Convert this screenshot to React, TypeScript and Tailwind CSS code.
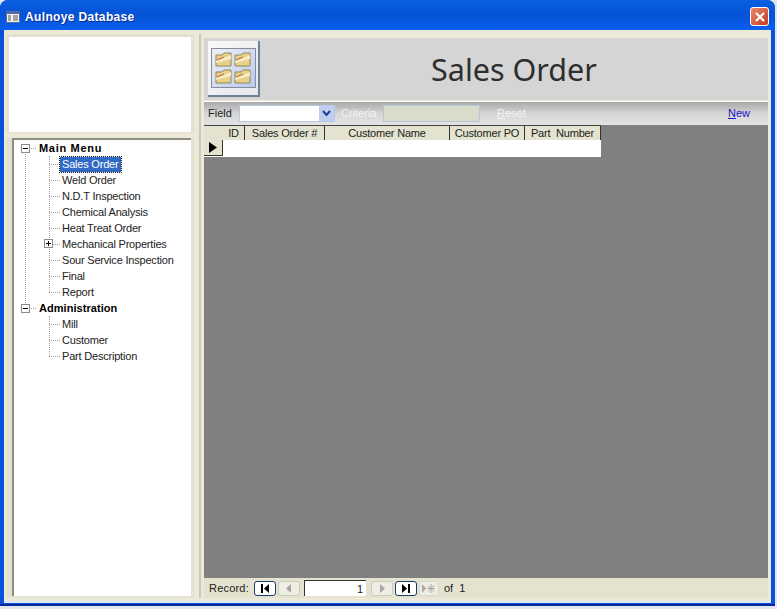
import React from "react";

const font = { fontFamily: '"Liberation Sans", Arial, sans-serif' };

const menu = [
  { label: "Main Menu", tracking: "tracking-[0.7px]", children: [
    "Sales Order", "Weld Order", "N.D.T Inspection", "Chemical Analysis", "Heat Treat Order",
    "Mechanical Properties", "Sour Service Inspection", "Final", "Report",
  ] },
  { label: "Administration", tracking: "tracking-[0.05px]", children: ["Mill", "Customer", "Part Description"] },
];

const columns = [
  { label: "ID", width: "w-[22px]" },
  { label: "Sales Order #", width: "w-[80px]" },
  { label: "Customer Name", width: "w-[125px]" },
  { label: "Customer PO", width: "w-[75px]" },
  { label: "Part  Number", width: "w-[76px]" },
];

const PlusMinus = ({ plus }: { plus?: boolean }) => (
  <span className="relative block w-[9px] h-[9px] border border-[#8c8c8c] bg-white">
    <span className="absolute left-[1px] top-[3px] w-[5px] h-[1px] bg-black" />
    {plus && <span className="absolute left-[3px] top-[1px] w-[1px] h-[5px] bg-black" />}
  </span>
);

const Folder = () => (
  <svg width="17" height="15" viewBox="0 0 17 15">
    <path d="M1 3 L1 14 L16 14 L16 1 L9 1 L7 3 Z" fill="#e8d08a" stroke="#8f8a55" />
    <path d="M1 9 L9 6 L16 3 L16 7 L1 11 Z" fill="#f8ecc0" />
    <path d="M2 8 L9 5" stroke="#c05a4a" />
  </svg>
);

const NavButton = ({ kind, active }: { kind: "first" | "prev" | "next" | "last" | "new"; active?: boolean }) => {
  const color = active ? "#000000" : "#a8a8a0";
  return (
    <span className={`flex items-center justify-center h-[15px] rounded-[3px] border ${kind === "new" ? "w-[20px] border-[#d8d8c8]" : "w-[22px]"} ${active ? "border-[#1c3a6b] bg-white" : "border-[#c9c9c0] bg-[#eeeee6]"}`}>
      <svg width="14" height="11" viewBox="0 0 14 11">
        {kind === "first" && <path d="M3 1h2v9H3z M11 1v9L6 5.5z" fill={color} />}
        {kind === "prev" && <path d="M9 1v9L4 5.5z" fill={color} />}
        {kind === "next" && <path d="M5 1v9l5-4.5z" fill={color} />}
        {kind === "last" && <path d="M3 1v9l5-4.5z M9 1h2v9H9z" fill={color} />}
        {kind === "new" && (
          <g>
            <path d="M0 1v9l4-4.5z" fill={color} />
            <path d="M9 1v9M5 5.5h8M6 2.5l6 6M12 2.5l-6 6" stroke={color} />
          </g>
        )}
      </svg>
    </span>
  );
};

const Tree = () => (
  <div className="relative text-[11px] leading-[16px] tracking-[-0.2px] text-[#222]">
    <div className="absolute left-[11px] top-[12px] h-[151px] border-l border-dotted border-[#a0a0a0]" />
    {menu.map((group) => (
      <div key={group.label}>
        <div className="flex items-center h-[16px]">
          <span className="relative z-10 ml-[7px]"><PlusMinus /></span>
          <span className="w-[5px] ml-[1px] mr-[3px] border-t border-dotted border-[#a0a0a0]" />
          <span className={`font-bold text-black ${group.tracking}`}>{group.label}</span>
        </div>
        <div className="relative">
          <div className={`absolute left-[35px] top-0 border-l border-dotted border-[#a0a0a0] ${group.children.length === 9 ? "h-[136px]" : "h-[40px]"}`} />
          {group.children.map((child) => (
            <div key={child} className="relative flex items-center h-[16px] pl-[35px]">
              <span className="w-[11px] border-t border-dotted border-[#a0a0a0]" />
              {child === "Mechanical Properties" && (
                <span className="absolute left-[30px] top-[3px]"><PlusMinus plus /></span>
              )}
              {child === "Sales Order" ? (
                <span className="px-[2px] h-[15px] leading-[15px] bg-[#316ac5] text-white outline-1 outline-dotted outline-[#1a1a1a]">{child}</span>
              ) : (
                <span className="ml-[2px]">{child}</span>
              )}
            </div>
          ))}
        </div>
      </div>
    ))}
  </div>
);

export default function App() {
  return (
    <div style={font} className="w-[777px] h-[609px] overflow-hidden bg-[#dfe6ee] text-black">
      <div className="w-[775px] h-[606px] flex flex-col overflow-hidden rounded-t-[8px] bg-[#0a3fc8] border-b-2 border-[#0a2a9c]">
        <div className="h-[30px] shrink-0 flex items-center justify-between pt-[3px] pl-[6px] pr-[6px] bg-gradient-to-b from-[#0a5fe0] via-[#0552d6] to-[#0a5ff0]">
          <div className="flex items-center gap-[5px]">
            <svg width="14" height="12" viewBox="0 0 14 12">
              <rect x="0.5" y="0.5" width="13" height="11" fill="#f4f4f4" stroke="#5a6a90" />
              <path d="M1 1h12v2H1z" fill="#4a68b8" />
              <path d="M2 5h3M2 7h3M2 9h3M7 5h5M7 7h5M7 9h5" stroke="#555" />
            </svg>
            <span className="text-[12px] font-bold text-white tracking-[0.35px] [text-shadow:1px_1px_0_#0a2a90]">Aulnoye Database</span>
          </div>
          <div className="flex items-center justify-center w-[19px] h-[19px] rounded-[3px] border border-white bg-gradient-to-br from-[#e88a6c] to-[#c23c1a]">
            <svg width="12" height="12" viewBox="0 0 12 12">
              <path d="M2 2l8 8M10 2l-8 8" stroke="#fff" strokeWidth="2.2" />
            </svg>
          </div>
        </div>

        <div className="flex-1 flex flex-col pl-[4px] pr-[4px] pb-[1px] min-h-0 bg-[#0a50dc]">
          <div className="flex-1 flex gap-[5px] min-h-0 bg-[#ece9d8] pl-[2px] pr-[2px] pt-[4px] pb-[3px] border-b-2 border-[#dfe8f0]">
            <div className="w-[188px] shrink-0 flex flex-col gap-[5px]">
              <div className="h-[99px] shrink-0 px-[3px] pt-[3px] pb-[1px] bg-[#e2e2d0]">
                <div className="h-full bg-white" />
              </div>
              <div className="flex-1 pl-[6px] pr-[3px] pb-[2px] bg-[#e2e2d0]">
                <div className="h-full bg-white border-t-2 border-l-2 border-[#8d8d84]">
                  <Tree />
                </div>
              </div>
            </div>

            <div className="flex-1 min-w-0 flex flex-col pl-[3px] pr-[1px] pt-[4px] border-l-2 border-[#c8c8b8]">
              <div className="h-[62px] shrink-0 flex items-center bg-[#d5d5d5] pl-[4px]">
                <div className="w-[52px] h-[56px] shrink-0 flex items-center justify-center bg-gradient-to-br from-[#fafafa] to-[#e6e6ec] border-r-2 border-b-2 border-[#6f7f9c]">
                  <div className="w-[45px] h-[40px] grid grid-cols-2 place-items-center px-[2px] py-[2px] border border-[#8a8a9a] bg-gradient-to-br from-[#eef0f4] to-[#b9c8ee]">
                    <Folder /><Folder /><Folder /><Folder />
                  </div>
                </div>
                <div className="flex-1 pt-[1px] text-center text-[30.5px] leading-none text-[#2e2e2e]" style={{ fontFamily: '"Noto Sans", sans-serif' }}>Sales Order</div>
              </div>

              <div className="h-[24px] shrink-0 flex items-center mt-[1px] pl-[4px] pr-[18px] text-[11px] bg-gradient-to-b from-[#a9a9a9] via-[#d6d6d6] to-[#e3e3e3] border-t border-white">
                <span className="text-[#222] w-[31px]">Field</span>
                <div className="w-[96px] h-[17px] flex justify-end bg-white border border-[#b8c8e0]">
                  <span className="w-[15px] flex items-center justify-center bg-[#c0cff0]">
                    <svg width="9" height="7" viewBox="0 0 9 7"><path d="M1 1l3.5 4L8 1" fill="none" stroke="#1c3f94" strokeWidth="2" /></svg>
                  </span>
                </div>
                <span className="ml-[6px] w-[42px] text-[#f4f4f4]">Criteria</span>
                <div className="w-[97px] h-[17px] bg-[#d9dccb] border border-[#b8c8d8]" />
                <span className="ml-[17px] text-[#f2f2f2]"><u>R</u>eset</span>
                <span className="ml-auto text-[#1414c8]"><u>N</u>ew</span>
              </div>

              <div className="flex-1 min-h-0 bg-[#808080]">
                <div className="w-[397px]">
                  <div className="flex h-[15px] bg-[#e3e3d0] text-[11px] leading-[14px] tracking-[-0.2px] text-[#222] border-t border-[#444]">
                    <div className="w-[19px] shrink-0" />
                    {columns.map((c) => (
                      <div key={c.label} className={`${c.width} shrink-0 text-center whitespace-pre border-r border-[#333]`}>{c.label}</div>
                    ))}
                  </div>
                  <div className="flex h-[17px] bg-white">
                    <div className="w-[19px] h-[16px] flex items-center justify-center bg-[#e3e3d0] border-r border-b border-[#333]">
                      <svg width="8" height="11" viewBox="0 0 8 11"><path d="M0 0l8 5.5L0 11z" fill="#000" /></svg>
                    </div>
                  </div>
                </div>
              </div>

              <div className="h-[20px] shrink-0 flex items-center pl-[5px] text-[11px] text-[#222] bg-[#e3e3d0]">
                <span className="w-[45px] tracking-[0.2px]">Record:</span>
                <NavButton kind="first" active />
                <span className="w-[2px]" />
                <NavButton kind="prev" />
                <div className="ml-[4px] w-[62px] h-[16px] bg-white border-t border-l border-[#333] text-right pr-[3px] leading-[16px]">1</div>
                <span className="w-[5px]" />
                <NavButton kind="next" />
                <span className="w-[2px]" />
                <NavButton kind="last" active />
                <span className="w-[2px]" />
                <NavButton kind="new" />
                <span className="ml-[5px]">of&nbsp;&nbsp;1</span>
              </div>
            </div>
          </div>
        </div>
      </div>
    </div>
  );
}
